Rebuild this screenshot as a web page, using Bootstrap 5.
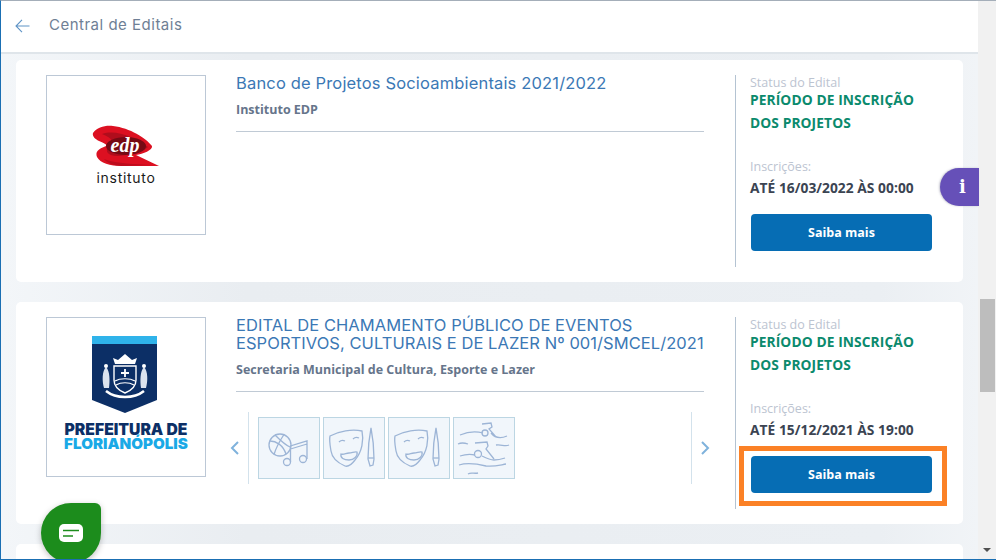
<!DOCTYPE html>
<html lang="pt-BR">
<head>
  <meta charset="UTF-8">
  <title>Central de Editais</title>
  <meta name="viewport" content="width=device-width, initial-scale=1">
  <link href="https://cdn.jsdelivr.net/npm/bootstrap@5.3.3/dist/css/bootstrap.min.css" rel="stylesheet">
  <style>
    html, body { height: 100%; overflow: hidden; }
    body { font-family: "Open Sans", sans-serif; background: #fff; }
    .janela { width: 996px; height: 560px; overflow: hidden; position: relative; display: flex; border-top: 1px solid #a4aeb9; border-left: 1px solid #1a6fb3; border-bottom: 1px solid #1a6fb3; }
    .pagina { flex: 1 1 auto; min-width: 0; display: flex; flex-direction: column; background: linear-gradient(90deg, #f3f6f9, #e9edf1 25%, #ebeff3 90%, #f1f4f7); }
    .topo { height: 53px; flex: none; background: #fff; border-bottom: 2px solid #dfe5ea; padding: 0 0 2px 14px; gap: 19px; }
    .topo-titulo { font-family: Inter, sans-serif; font-size: 15px; color: #6f7f95; letter-spacing: .5px; }
    .lista { padding: 6px 15px 0 15px; }
    .edital { height: 222px; margin-bottom: 20px; border: 0; border-radius: 5px; padding: 15px 0 0 30px; flex: none; }
    .logo-box { width: 160px; height: 160px; border: 1px solid #bcc8d6; flex: none; }
    .miolo { width: 468px; margin-left: 30px; flex: none; }
    .edital-titulo { font-family: Inter, sans-serif; font-size: 16.5px; line-height: 18px; color: #3b78b5; margin: -1px -8px 0 0; font-weight: 400; letter-spacing: .16px; }
    .titulo-caixa-alta { letter-spacing: .06px; }
    .edital-org { font-size: 12.5px; font-weight: 700; color: #66758b; margin: 9px 0 13px; line-height: 17px; }
    .traco { border-top: 1px solid #c0cad5; height: 0; }
    .carrossel { margin: 20px 0 0 -7px; width: 492px; }
    .seta { width: 12px; flex: none; }
    .faixa { border-left: 1px solid #d3e2ec; border-right: 1px solid #d3e2ec; height: 72px; width: 444px; margin: 0 7px 0 7px; padding-left: 9px; gap: 3px; flex: none; }
    .cat { width: 62px; height: 62px; background: #f1f6fb; border: 1px solid #bcd6e3; flex: none; }
    .lateral { width: 228px; height: 192px; margin-left: 31px; border-left: 1px solid #b4c3d2; padding: 1px 0 0 14px; flex: none; position: relative; }
    .rotulo { font-size: 12.5px; color: #bcc4d1; line-height: 14px; }
    .status { font-size: 13.75px; font-weight: 700; color: #0b8a6d; line-height: 23px; margin-top: -2px; height: 72px; letter-spacing: .1px; }
    .prazo { font-size: 13.75px; font-weight: 700; color: #3b4452; margin: 4px 0 16px; line-height: 20px; letter-spacing: .05px; }
    .btn-saiba { width: 181px; height: 37px; margin-left: 1px; background: #066db4; border: 0; border-radius: 4px; color: #fff; font-size: 12.5px; font-weight: 700; padding: 1px 0 0; }
    .btn-saiba:hover { background: #066db4; color: #fff; }
    .destaque { position: absolute; left: 738px; top: 445px; width: 208px; height: 60px; border: 5px solid #fb8126; }
    .barra { width: 18px; flex: none; background: #f1f1f1; position: relative; }
    .barra-cursor { position: absolute; left: 2px; right: 1px; top: 298px; height: 93px; background: #bdbdbd; }
    .barra-desce { position: absolute; left: 5px; top: 547px; border-left: 4px solid transparent; border-right: 4px solid transparent; border-top: 4px solid #505050; }
    .info-aba { position: absolute; left: 939px; top: 167px; width: 39px; height: 38px; padding-left: 6px; background: #6650b8; border-radius: 19px 0 0 19px; box-shadow: -1px 0 2px rgba(90,90,120,.35); color: #fff; font-family: "DejaVu Serif", serif; font-weight: 700; font-size: 18px; line-height: 38px; text-align: center; }
    .chat-bolha { position: absolute; left: 40px; top: 502px; width: 60px; height: 60px; background: #1c8c1c; border-radius: 50% 6px 50% 50%; box-shadow: 0 2px 6px rgba(0,0,0,.25); }
  </style>
</head>
<body>

  <div class="janela">
    <div class="pagina">

      <div class="topo d-flex align-items-center">
        <svg width="15" height="14" viewBox="0 0 15 14" fill="none" stroke="#5f94c6" stroke-width="1.1"><path d="M14.5 7H1M7 .8 1 7l6 6.2"/></svg>
        <span class="topo-titulo">Central de Editais</span>
      </div>

      <div class="lista">

        <div class="card edital flex-row">
          <div class="logo-box">
            <svg width="158" height="158" viewBox="1 1 158 158">
              <path d="M47 58C51 52 60 50 67 51 84 53 100 63 106 71 107 75 97 79 90 80L113 91 76 91C64 91 54 88 51 82 49 77 52 74 60 71 62 70 58 68 53 66 49 64 46 61 47 58Z" fill="#dc1021"/>
              <path d="M56 59C70 54 88 62 102 72 96 77 84 80 72 81 62 81 58 76 63 72 69 67 66 63 56 59Z" fill="#b00d1c"/>
              <ellipse cx="80" cy="71" rx="20" ry="9" fill="#760a14"/>
              <path d="M58 84C72 89 88 89 106 90L76 91C68 91 61 88 58 84Z" fill="#bc0c1c"/>
              <text x="79" y="77" text-anchor="middle" fill="#fff" font-family="'Liberation Serif', serif" font-style="italic" font-weight="700" font-size="20">edp</text>
              <text x="80" y="108" text-anchor="middle" fill="#1a1a1a" font-family="Inter, sans-serif" font-size="14" letter-spacing=".7">instituto</text>
            </svg>
          </div>
          <div class="miolo">
            <h2 class="edital-titulo">Banco de Projetos Socioambientais 2021/2022</h2>
            <p class="edital-org">Instituto EDP</p>
            <div class="traco"></div>
          </div>
          <div class="lateral">
            <div class="rotulo">Status do Edital</div>
            <div class="status">PERÍODO DE INSCRIÇÃO<br>DOS PROJETOS</div>
            <div class="rotulo">Inscrições:</div>
            <div class="prazo">ATÉ 16/03/2022 ÀS 00:00</div>
            <button type="button" class="btn btn-saiba">Saiba mais</button>
          </div>
        </div>

        <div class="card edital flex-row">
          <div class="logo-box">
            <svg width="158" height="158" viewBox="1 1 158 158">
              <path d="M46 19H111V83L79 96 46 83Z" fill="#0c2f66"/>
              <rect x="46" y="19" width="65" height="8" fill="#2fb3ea"/>
              <g fill="none" stroke="#fff">
                <path d="M68 49H90V63C90 70 84 74 79 76 74 74 68 70 68 63Z" stroke-width="1.4"/>
                <path d="M69 47H89L91 41 86 43 79 37 72 43 67 41Z" fill="#fff" stroke="none"/>
                <path d="M69 64C74 61 84 61 89 64M70 68C75 65 83 65 88 68" stroke-width="1.2"/>
                <path d="M75 56H83M79 52V60" stroke-width="1.8"/>
                <path d="M60 50C56 54 56 64 58 71H63C64 64 64 54 60 50ZM98 50C94 54 94 64 95 71H100C102 64 102 54 98 50Z" fill="#dbe3ef" stroke="none"/>
                <circle cx="60" cy="49" r="2" fill="#fff" stroke="none"/>
                <circle cx="98" cy="49" r="2" fill="#fff" stroke="none"/>
                <path d="M60 74C70 82 88 82 98 74" stroke-width="2.600"/>
              </g>
              <text fill="#0c2f66" font-family="Inter, sans-serif" font-weight="900" font-size="15.7" text-anchor="middle"><tspan x="80" y="118">PREFEITURA DE</tspan><tspan x="80" y="132" fill="#1aa9e6" font-size="15.2">FLORIANÓPOLIS</tspan></text>
            </svg>
          </div>
          <div class="miolo">
            <h2 class="edital-titulo titulo-caixa-alta">EDITAL DE CHAMAMENTO PÚBLICO DE EVENTOS ESPORTIVOS, CULTURAIS E DE LAZER Nº 001/SMCEL/2021</h2>
            <p class="edital-org">Secretaria Municipal de Cultura, Esporte e Lazer</p>
            <div class="traco"></div>
            <div class="carrossel d-flex align-items-center">
              <svg class="seta" width="12" height="16" viewBox="0 0 12 16" fill="none" stroke="#7fb2dc" stroke-width="2"><path d="M9 2 3 8l6 6"/></svg>
              <div class="faixa d-flex align-items-center">
                <div class="cat">
                  <svg width="60" height="60" viewBox="0 0 60 60" fill="none" stroke="#9db5d6" stroke-width="1.3">
                    <circle cx="21" cy="27" r="11"/>
                    <path d="M11 23C17 23 24 27 27 36M16 17C21 22 26 27 31 29M25 16.500C22 21 17 30 15 36.500"/>
                    <circle cx="28" cy="44" r="3.500"/><circle cx="44" cy="41" r="3.500"/>
                    <path d="M31.500 44V28L48 23V41M31.500 31 48 26"/>
                  </svg>
                </div>
                <div class="cat">
                  <svg width="60" height="60" viewBox="0 0 60 60" fill="none" stroke="#9db5d6" stroke-width="1.3">
                    <path d="M6 18C15 13 28 11 38 13 40 22 38 34 31 42 28 46 24 49 21 48 14 45 8 40 7 33 6 27 5 22 6 18Z"/>
                    <path d="M15 24C17 22 19 22 21 23M29 21C31 19 33 19 35 20"/>
                    <path d="M17 36C20 37 22 35 25 35 28 35 31 33 33 34 34 38 30 42 25 42 20 42 16 40 17 36Z"/>
                    <path d="M47 10C45 20 44 30 44 41L46 48 49 47 50 41C50 30 49 20 47 10Z"/><path d="M44 40H50"/>
                  </svg>
                </div>
                <div class="cat">
                  <svg width="60" height="60" viewBox="0 0 60 60" fill="none" stroke="#9db5d6" stroke-width="1.3">
                    <path d="M6 18C15 13 28 11 38 13 40 22 38 34 31 42 28 46 24 49 21 48 14 45 8 40 7 33 6 27 5 22 6 18Z"/>
                    <path d="M15 24C17 22 19 22 21 23M29 21C31 19 33 19 35 20"/>
                    <path d="M17 36C20 37 22 35 25 35 28 35 31 33 33 34 34 38 30 42 25 42 20 42 16 40 17 36Z"/>
                    <path d="M47 10C45 20 44 30 44 41L46 48 49 47 50 41C50 30 49 20 47 10Z"/><path d="M44 40H50"/>
                  </svg>
                </div>
                <div class="cat">
                  <svg width="60" height="60" viewBox="0 0 60 60" fill="none" stroke="#9db5d6" stroke-width="1.3">
                    <path d="M6 17C13 14 22 13 29 15M37 15C41 20 46 21 53 18M28 6 37 5 38 9 35 11 42 19"/>
                    <circle cx="31" cy="15" r="3"/>
                    <path d="M4 26C8 24 11 25 14 26M42 27C47 26 51 29 55 27"/>
                    <path d="M21 25 33 24 34 28 32 31 40 41"/>
                    <circle cx="24" cy="36" r="3.500"/>
                    <path d="M6 38C12 36 17 36 21 37M28 38C32 40 36 42 40 42 44 42 48 41 51 40M5 47C14 44 24 46 32 48 40 49 46 47 52 46M14 56C17 54 20 56 24 55"/>
                  </svg>
                </div>
              </div>
              <svg class="seta" width="12" height="16" viewBox="0 0 12 16" fill="none" stroke="#7fb2dc" stroke-width="2"><path d="m3 2 6 6-6 6"/></svg>
            </div>
          </div>
          <div class="lateral">
            <div class="rotulo">Status do Edital</div>
            <div class="status">PERÍODO DE INSCRIÇÃO<br>DOS PROJETOS</div>
            <div class="rotulo">Inscrições:</div>
            <div class="prazo">ATÉ 15/12/2021 ÀS 19:00</div>
            <button type="button" class="btn btn-saiba">Saiba mais</button>
          </div>
        </div>

        <div class="card edital flex-row"></div>
      </div>
    </div>

    <div class="barra">
      <div class="barra-cursor"></div>
      <div class="barra-desce"></div>
    </div>

    <div class="info-aba">i</div>
    <div class="chat-bolha d-flex align-items-center justify-content-center">
      <svg width="24" height="18" viewBox="0 0 24 18"><rect x="0" y="0" width="24" height="18" rx="5" fill="#fff"/><path d="M4 6.500H20" stroke="#1c8c1c" stroke-width="1.500"/><path d="M4 12H14" stroke="#1c8c1c" stroke-width="1.500"/></svg>
    </div>
    <div class="destaque"></div>
  </div>

  <script src="https://cdn.jsdelivr.net/npm/bootstrap@5.3.3/dist/js/bootstrap.bundle.min.js"></script>
</body>
</html>
